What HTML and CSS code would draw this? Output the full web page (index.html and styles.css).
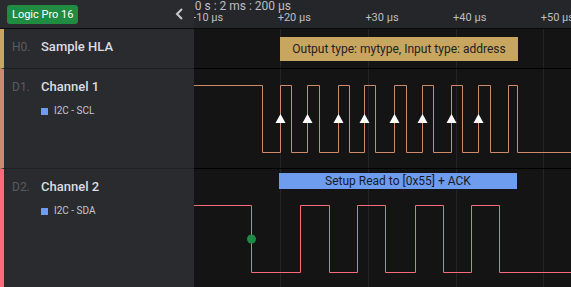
FILE: index.html
```html
<!DOCTYPE html>
<html lang="en">
<head>
    <meta charset="UTF-8">
    <title>Logic Pro 16 - Capture</title>
    <link rel="stylesheet" href="styles.css">
</head>
<body>
    <div class="app">
        <div class="topbar">
            <div class="brand">
                <span class="device">Logic Pro 16</span>
                <svg class="collapse" width="10" height="12" viewBox="0 0 10 12">
                    <polyline points="7,1 2,6 7,11" fill="none" stroke="#c9cacd" stroke-width="2"/>
                </svg>
            </div>
            <div class="timebar">
                <div class="time-origin">10 s : 2 ms : 200 µs</div>
                <div class="ticks">
                    <span>+10 µs</span>
                    <span>+20 µs</span>
                    <span>+30 µs</span>
                    <span>+40 µs</span>
                    <span>+50 µs</span>
                </div>
            </div>
        </div>

        <!-- H0: analyzer row -->
        <div class="row row-hla">
            <div class="label-cell strip-hla">
                <div class="title"><span class="idx">H0.</span><span class="name">Sample HLA</span></div>
            </div>
            <div class="track">
                <svg class="wave" width="377" height="39">
                    <g stroke="#232427"><line x1="86.5" y1="0" x2="86.5" y2="39"/><line x1="174.5" y1="0" x2="174.5" y2="39"/><line x1="262.5" y1="0" x2="262.5" y2="39"/><line x1="349.5" y1="0" x2="349.5" y2="39"/></g>
                </svg>
                <div class="frame frame-hla">Output type: mytype, Input type: address</div>
            </div>
        </div>

        <!-- D1: SCL -->
        <div class="row row-d1">
            <div class="label-cell strip-d1">
                <div class="title"><span class="idx">D1.</span><span class="name">Channel 1</span></div>
                <div class="analyzer"><i class="swatch"></i>I2C - SCL</div>
            </div>
            <div class="track">
                <svg class="wave" width="377" height="99">
                    <g stroke="#232427"><line x1="86.5" y1="0" x2="86.5" y2="99"/><line x1="174.5" y1="0" x2="174.5" y2="99"/><line x1="262.5" y1="0" x2="262.5" y2="99"/><line x1="349.5" y1="0" x2="349.5" y2="99"/></g>
                    <path fill="none" stroke="#cf8a6b" stroke-width="1" d="M0 16.5H68.5V83.5H86.5V16.5H97.5V83.5H113.5V16.5H125.5V83.5H144.5V16.5H155.5V83.5H170.5V16.5H181.5V83.5H200.5V16.5H212.5V83.5H228.5V16.5H239.5V83.5H257.5V16.5H268.5V83.5H284.5V16.5H296.5V83.5H314.5V16.5H323.5V83.5H377"/>
                    <g fill="#fff">
                        <polygon points="86.5,45 81.5,54 91.5,54"/>
                        <polygon points="113.5,45 108.5,54 118.5,54"/>
                        <polygon points="144.5,45 139.5,54 149.5,54"/>
                        <polygon points="170.5,45 165.5,54 175.5,54"/>
                        <polygon points="200.5,45 195.5,54 205.5,54"/>
                        <polygon points="228.5,45 223.5,54 233.5,54"/>
                        <polygon points="257.5,45 252.5,54 262.5,54"/>
                        <polygon points="284.5,45 279.5,54 289.5,54"/>
                    </g>
                </svg>
            </div>
        </div>

        <!-- D2: SDA -->
        <div class="row row-d2">
            <div class="label-cell strip-d2">
                <div class="title"><span class="idx">D2.</span><span class="name">Channel 2</span></div>
                <div class="analyzer"><i class="swatch"></i>I2C - SDA</div>
            </div>
            <div class="track">
                <svg class="wave" width="377" height="118">
                    <g stroke="#232427"><line x1="86.5" y1="0" x2="86.5" y2="118"/><line x1="174.5" y1="0" x2="174.5" y2="118"/><line x1="262.5" y1="0" x2="262.5" y2="118"/><line x1="349.5" y1="0" x2="349.5" y2="118"/></g>
                    <path fill="none" stroke="#fb6a79" stroke-width="1" d="M0 36.5H57.5V103.5H106.5V36.5H135.5V103.5H163.5V36.5H191.5V103.5H221.5V36.5H249.5V103.5H277.5V36.5H305.5V103.5H377"/>
                    <circle cx="57.5" cy="70" r="4.5" fill="#1e8a45"/>
                </svg>
                <div class="frame frame-i2c">Setup Read to [0x55] + ACK</div>
            </div>
        </div>
    </div>
</body>
</html>
```

FILE: styles.css
```css
* {
    margin: 0;
    padding: 0;
    box-sizing: border-box;
}

body {
    font-family: Roboto, "Liberation Sans", sans-serif;
    background: #141414;
    width: 571px;
    height: 287px;
    overflow: hidden;
}

.app {
    width: 571px;
    height: 287px;
    display: flex;
    flex-direction: column;
}

.topbar {
    display: flex;
    height: 29px;
    border-bottom: 1px solid #0b0b0c;
    background: #252629;
}

.brand {
    width: 194px;
    display: flex;
    align-items: center;
    justify-content: space-between;
    padding: 0 9px 0 7px;
    background: #2a2b2f;
}

.device {
    height: 19px;
    line-height: 19px;
    padding: 0 5px;
    border-radius: 3px;
    background: #1f8c42;
    color: #fff;
    font-size: 11px;
}

.collapse {
    display: block;
}

.timebar {
    flex: 1;
    overflow: hidden;
    color: #bdbec1;
    font-size: 11px;
    line-height: 12px;
    white-space: nowrap;
}

.time-origin {
    margin-left: -6px;
    font-size: 12px;
}

.ticks {
    display: flex;
    margin-left: -4px;
}

.ticks span {
    flex: 0 0 87.7px;
}

.row {
    display: flex;
}

.row-hla { height: 40px; }
.row-d1 { height: 100px; }
.row-d2 { flex: 1; }

.label-cell {
    width: 194px;
    background: #2a2b2f;
    border-left: 4px solid;
    border-bottom: 1px solid #1e1f22;
    padding: 10px 0 0 8px;
}

.row-d2 .label-cell {
    border-bottom: none;
}

.strip-hla { border-left-color: #c9a561; }
.strip-d1 { border-left-color: #c98a6e; }
.strip-d2 { border-left-color: #fd6b7b; }

.title {
    display: flex;
    align-items: baseline;
    line-height: 16px;
}

.idx {
    width: 29px;
    font-size: 12px;
    color: #5a5b60;
}

.name {
    font-size: 13px;
    font-weight: 500;
    color: #dcdde0;
}

.analyzer {
    display: flex;
    align-items: center;
    margin: 10px 0 0 29px;
    font-size: 10px;
    line-height: 12px;
    color: #c5c6c9;
}

.swatch {
    width: 7px;
    height: 7px;
    margin-right: 6px;
    background: #6e9df0;
}

.track {
    flex: 1;
    position: relative;
    border-bottom: 1px solid #000;
}

.row-d2 .track {
    border-bottom: none;
}

.wave {
    display: block;
}

/* decoded frames sit on top of the waveform */
.frame {
    position: absolute;
    display: flex;
    align-items: center;
    justify-content: center;
    font-size: 12px;
    white-space: nowrap;
}

.frame-hla {
    left: 86px;
    top: 8px;
    width: 238px;
    height: 24px;
    background: #c9a660;
    color: #222;
}

.frame-i2c {
    left: 85px;
    top: 4px;
    width: 238px;
    height: 16px;
    background: #6e9df0;
    color: #161a28;
}
```
